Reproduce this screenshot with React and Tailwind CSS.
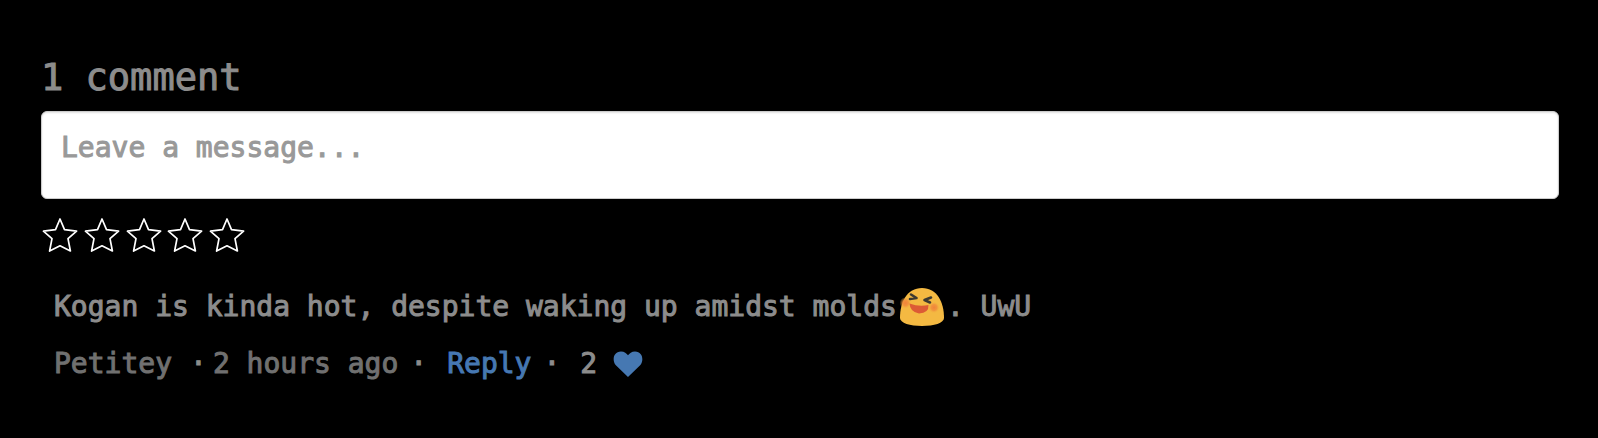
import React, { useState } from 'react';

function Star({ filled }) {
  return (
    <svg viewBox="0 0 36 36" className="h-9 w-9" fill={filled ? '#fff' : 'none'} stroke="#fff" strokeWidth="1.7" strokeLinejoin="round" aria-hidden="true">
      <path d="M18 2 L22.5 12.6 L34.6 14.2 L26 21.6 L28.4 34 L18 28.8 L7.6 34 L10 21.6 L1.4 14.2 L13.5 12.6 Z" />
    </svg>
  );
}

function Laughing() {
  return (
    <svg viewBox="0 0 46 40" className="mx-0.5 -my-1 h-10 w-[46px] shrink-0" role="img" aria-label="laughing">
      <defs>
        <radialGradient id="blush">
          <stop offset="0" stopColor="#f08339" />
          <stop offset="0.5" stopColor="#f08c3c" stopOpacity="0.8" />
          <stop offset="1" stopColor="#f4b942" stopOpacity="0" />
        </radialGradient>
      </defs>
      <path d="M1 31 C1 15 8 1 23 1 C38 1 45 15 45 31 C45 36 35 39 23 39 C11 39 1 36 1 31 Z" fill="#f4b942" />
      <circle cx="6.5" cy="16" r="6" fill="url(#blush)" />
      <circle cx="35" cy="20.5" r="6" fill="url(#blush)" />
      <path d="M12 7.5 L17.5 11 L11 12 M32 10.5 L25.5 13 L31 15.5" fill="none" stroke="#3d3a31" strokeWidth="2.6" strokeLinecap="round" strokeLinejoin="round" />
      <path d="M10.5 16.5 Q20 20 29.5 18 Q30 26 20 26.5 Q11 25 10.5 16.5 Z" fill="#dc5b35" />
    </svg>
  );
}

function Dot({ className }) {
  return <span className={className} aria-hidden="true">·</span>;
}

export default function App() {
  const [rating, setRating] = useState(0);
  return (
    <main className="min-h-screen bg-black pr-[39px] pl-[41px] pt-[54px] pb-11 font-['DejaVu_Sans_Mono','Liberation_Mono',monospace] text-[28px] leading-9 text-[#8c8c8c] [-webkit-text-stroke:1px_currentColor]">
      <h1 className="text-[37px] leading-[48px]">1 comment</h1>
      <textarea
        aria-label="Leave a message"
        placeholder="Leave a message..."
        className="mt-[9px] block h-[88px] w-full resize-none rounded-md border border-[#ccc] bg-white px-[19px] py-[18px] text-[#333] shadow-[inset_0_1px_2px_rgba(0,0,0,0.12)] outline-none placeholder:text-[#999] placeholder:opacity-100"
      />
      <div className="mt-[18px] flex w-[210px] pl-px" role="group" aria-label="Rating">
        {[1, 2, 3, 4, 5].map((n) => (
          <button key={n} type="button" aria-label={`Rate ${n}`} onClick={() => setRating(n)} className="flex flex-1">
            <Star filled={n <= rating} />
          </button>
        ))}
      </div>
      <article className="mt-9 pl-[13px]">
        <p className="flex flex-wrap items-center">
          <span>Kogan is kinda hot, despite waking up amidst molds</span>
          <Laughing />
          <span>. UwU</span>
        </p>
        <footer className="mt-[21px] flex items-center">
          <span className="text-[#707070]">Petitey</span>
          <Dot className="ml-[18px]" />
          <time className="ml-1.5 text-[#707070]">2 hours ago</time>
          <Dot className="ml-3" />
          <a href="#reply" className="ml-5 text-[#4678b2]">Reply</a>
          <Dot className="ml-3" />
          <span className="ml-5">2</span>
          <button type="button" aria-label="Like" className="ml-4">
            <svg viewBox="0 0 30 26" className="h-[26px] w-[30px]" fill="#4678b2" aria-hidden="true">
              <path d="M15 26 L2.6 14 C-1 9.5 0.2 0.5 8 0.5 C11.4 0.5 13.6 2.4 15 4.3 C16.4 2.4 18.6 0.5 22 0.5 C29.8 0.5 31 9.5 27.4 14 Z" />
            </svg>
          </button>
        </footer>
      </article>
    </main>
  );
}
